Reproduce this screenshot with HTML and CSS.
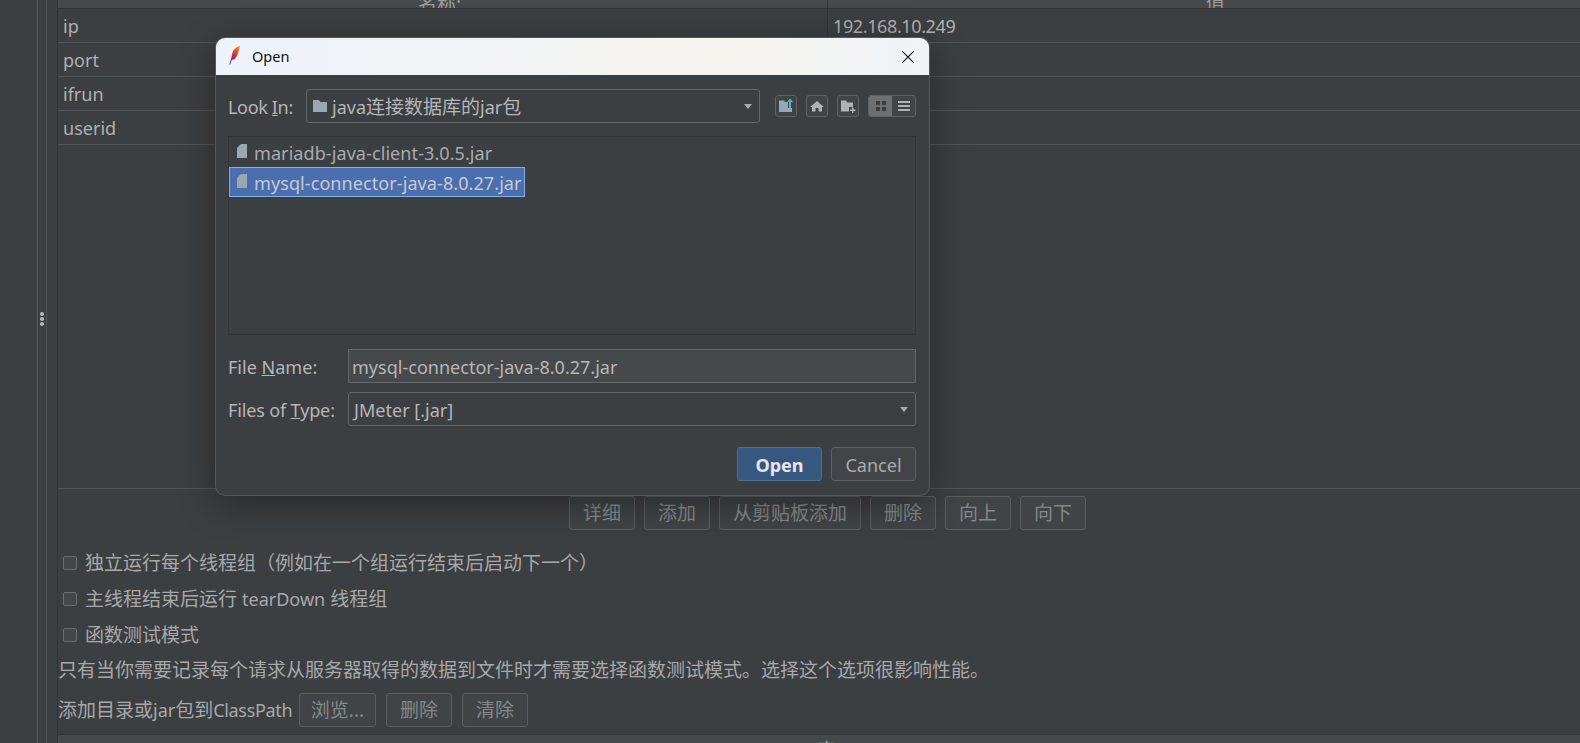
FILE: index.html
```html
<!DOCTYPE html>
<html lang="zh">
<head>
<meta charset="utf-8">
<title>JMeter Open</title>
<link rel="stylesheet" href="styles.css">
</head>
<body>
<div class="rail">
  <div class="rail-a"></div>
  <div class="rail-b"><span class="dot"></span><span class="dot"></span><span class="dot"></span></div>
  <div class="rail-c"></div>
</div>
<main class="main">
  <section class="table">
    <div class="thead"><div class="th th-name"><span>名称:</span></div><div class="th th-value"><span>值</span></div></div>
    <div class="row"><div class="cell cell-name en">ip</div><div class="cell en ipval">192.168.10.249</div></div>
    <div class="row"><div class="cell cell-name en">port</div><div class="cell"></div></div>
    <div class="row"><div class="cell cell-name en">ifrun</div><div class="cell"></div></div>
    <div class="row"><div class="cell cell-name en">userid</div><div class="cell"></div></div>
    <div class="table-fill"></div>
  </section>
  <div class="btn-row">
    <button class="btn">详细</button>
    <button class="btn">添加</button>
    <button class="btn">从剪贴板添加</button>
    <button class="btn">删除</button>
    <button class="btn">向上</button>
    <button class="btn">向下</button>
  </div>
  <div class="options">
    <label class="opt"><span class="check"></span><span>独立运行每个线程组（例如在一个组运行结束后启动下一个）</span></label>
    <label class="opt"><span class="check"></span><span>主线程结束后运行 <span class="en">tearDown</span> 线程组</span></label>
    <label class="opt"><span class="check"></span><span>函数测试模式</span></label>
  </div>
  <p class="info">只有当你需要记录每个请求从服务器取得的数据到文件时才需要选择函数测试模式。选择这个选项很影响性能。</p>
  <div class="cp-row">
    <span class="cp-label">添加目录或<span class="en">jar</span>包到<span class="en cp-en">ClassPath</span></span>
    <button class="btn btn-browse">浏览...</button>
    <button class="btn">删除</button>
    <button class="btn">清除</button>
  </div>
  <div class="bottom-head"><span>库</span></div>
</main>

<div class="dialog">
  <header class="titlebar">
    <svg class="feather" viewBox="0 0 11 19" width="11" height="19">
      <defs><linearGradient id="fg" x1="1" y1="0" x2="0" y2="1"><stop offset="0" stop-color="#f6a623"/><stop offset=".4" stop-color="#e8502e"/><stop offset=".75" stop-color="#bd1e5c"/><stop offset="1" stop-color="#6d2a86"/></linearGradient></defs>
      <path fill="url(#fg)" d="M11 0C8 .5 4.500 3 3.500 7L1.800 14 5 13.500C7 12 8.500 9 9.300 6.500 10 4 10.800 2 11 0Z"/>
      <path stroke="#6d2a86" stroke-width="1" fill="none" d="M2.500 13L.8 18.500"/>
    </svg>
    <span class="title">Open</span>
    <svg class="close" viewBox="0 0 12 12" width="12" height="12"><path d="M0 0L12 12M12 0L0 12" stroke="#111" stroke-width="1.100" fill="none"/></svg>
  </header>
  <div class="dlg-body">
    <div class="look-row">
      <span class="look-label en">Look <u>I</u>n:</span>
      <div class="combo combo-look">
        <svg class="ico-folder" viewBox="0 0 14 12" width="14" height="12"><path fill="#9aa7b0" d="M0 0H6L7.500 2H14V12H0Z"/></svg>
        <span class="combo-text"><span class="en">java</span>连接数据库的<span class="en">jar</span>包</span>
        <i class="caret"></i>
      </div>
      <div class="tools">
        <span class="tool"><svg viewBox="0 0 16 16" width="16" height="16"><path fill="#9aa7b0" d="M1 2.500H6L7 4H10V10H14V14H1Z"/><path fill="#40b6e0" d="M12 .5L15 4H13V10H11V4H9Z"/></svg></span>
        <span class="tool"><svg viewBox="0 0 16 16" width="16" height="16"><path fill="#afb1b3" d="M8 3L15 9H13V13.500H9.500V10H6.500V13.500H3V9H1Z"/></svg></span>
        <span class="tool"><svg viewBox="0 0 16 16" width="16" height="16"><path fill="#afb1b3" d="M1 2.500H6L7.500 4.500H13V9H9V13.500H1Z"/><path fill="#afb1b3" d="M12 9.500H13.500V11.500H15.500V13H13.500V15H12V13H10V11.500H12Z"/></svg></span>
        <span class="toggle">
          <span class="tg tg-on"><svg viewBox="0 0 10 10" width="10" height="10"><path fill="#3a3c3e" d="M0 0H4V4H0ZM6 0H10V4H6ZM0 6H4V10H0ZM6 6H10V10H6Z"/></svg></span>
          <span class="tg"><svg viewBox="0 0 12 10" width="12" height="10"><path fill="#afb1b3" d="M0 0H12V2H0ZM0 4H12V6H0ZM0 8H12V10H0Z"/></svg></span>
        </span>
      </div>
    </div>
    <div class="files">
      <div class="file en"><svg class="ico-file" viewBox="0 0 10 14" width="10" height="14"><path fill="#9aa7b0" d="M4 0H10V14H0V4Z"/></svg><span class="file-name">mariadb-java-client-3.0.5.jar</span></div>
      <div class="file file-sel en"><svg class="ico-file" viewBox="0 0 10 14" width="10" height="14"><path fill="#9aa7b0" d="M4 0H10V14H0V4Z"/></svg><span class="file-name">mysql-connector-java-8.0.27.jar</span></div>
    </div>
    <div class="form-row">
      <span class="form-label en">File <u>N</u>ame:</span>
      <div class="input en">mysql-connector-java-8.0.27.jar</div>
    </div>
    <div class="form-row form-row-2">
      <span class="form-label en tight">Files of <u>T</u>ype:</span>
      <div class="combo combo-type en"><span class="combo-text">JMeter [.jar]</span><i class="caret"></i></div>
    </div>
    <div class="actions">
      <button class="act act-primary en">Open</button>
      <button class="act en">Cancel</button>
    </div>
  </div>
</div>
</body>
</html>
```
FILE: styles.css
```css
* { box-sizing: border-box; }
html, body { height: 100%; }
body {
  margin: 0;
  height: 743px;
  overflow: hidden;
  display: flex;
  background: #3c3f41;
  color: #b4b6b8;
  font-family: "Noto Sans", "Noto Sans CJK SC", sans-serif;
  font-size: 19px;
  line-height: 1;
}
button { font: inherit; cursor: default; }
.en { font-size: 18.050px; }

.rail { flex: 0 0 58px; display: flex; height: 743px; }
.rail-a { width: 38px; border-right: 1px solid #54585a; }
.rail-b { width: 9px; border-right: 1px solid #54585a; display: flex; flex-direction: column; align-items: center; justify-content: flex-start; gap: 1.500px; padding-top: 312px; }
.rail-c { width: 11px; border-right: 1px solid #323436; }
.dot { width: 3.500px; height: 3.500px; border-radius: 50%; background: #b4b4b4; }

.main { flex: 1; min-width: 0; display: flex; flex-direction: column; }

.table { height: 489px; flex: none; border-bottom: 1px solid #515558; display: flex; flex-direction: column; }
.thead { height: 9px; display: flex; background: #45494b; border-bottom: 1px solid #323436; overflow: hidden; flex: none; }
.th { display: flex; align-items: flex-end; height: 8px; color: #9a9c9e; }
.th span { flex: none; line-height: 20px; margin-bottom: -6px; }
.th-name { flex: 0 0 770px; border-right: 1px solid #323436; justify-content: center; padding-right: 6px; }
.th-value { flex: 1; padding-left: 378px; }
.row { height: 34px; display: flex; border-bottom: 1px solid #515558; flex: none; }
.cell { display: flex; align-items: center; flex: 1; padding: 1px 0 0 5px; color: #aeb0b2; }
.cell-name { flex: 0 0 770px; border-right: 1px solid #323436; }
.ipval { letter-spacing: -.4px; }
.table-fill { flex: 1; }

.btn-row { margin-top: 7px; padding-left: 17px; display: flex; justify-content: center; gap: 9px; flex: none; }
.btn {
  height: 34px;
  padding: 0 13px;
  background: #404446;
  border: 1px solid #5b5e60;
  border-radius: 3px;
  color: #85888a;
  white-space: nowrap;
}

.options { margin-top: 15px; flex: none; }
.opt { height: 36px; display: flex; align-items: center; padding-left: 5px; gap: 8px; color: #a6a8aa; white-space: nowrap; }
.check { flex: none; width: 14px; height: 14px; border: 1px solid #6b6e70; border-radius: 2px; background: #43474a; }

.info { margin: 0; height: 34px; display: flex; align-items: center; color: #a6a8aa; flex: none; }

.cp-row { margin-top: 6px; display: flex; align-items: center; gap: 10px; flex: none; }
.cp-label { margin-right: -2px; color: #a6a8aa; width: 233px; white-space: nowrap; }
.cp-en { letter-spacing: -.35px; }
.btn-browse { width: 77px; padding: 0; }

.bottom-head { margin-top: 7px; height: 20px; border-top: 1px solid #323436; background: #45494b; display: flex; justify-content: center; padding: 6px 0 0 14px; color: #9a9c9e; flex: none; }

.dialog {
  position: absolute;
  left: 216px;
  top: 38px;
  width: 713px;
  height: 457px;
  border-radius: 9px;
  background: #3c3f41;
  box-shadow: 0 0 0 1px #55585a, 0 8px 36px rgba(0, 0, 0, .38);
  display: flex;
  flex-direction: column;
  overflow: hidden;
}
.titlebar {
  height: 37px;
  flex: none;
  display: flex;
  align-items: center;
  padding: 0 15px 0 13px;
  background: linear-gradient(90deg, #eef2fa 0%, #f3f3f3 50%, #f6f4ef 70%, #eff3f7 100%);
  color: #111;
}
.feather { flex: none; margin-top: -2px; }
.title { margin-left: 12px; font-size: 14.500px; flex: 1; }
.close { flex: none; margin-top: 1px; }

.dlg-body { flex: 1; padding: 14px 13px 14px 12px; display: flex; flex-direction: column; color: #b4b6b8; }

.look-row { display: flex; align-items: center; height: 34px; flex: none; }
.look-label { width: 78px; flex: none; white-space: nowrap; padding-top: 2px; letter-spacing: -.35px; }
.combo {
  height: 34px;
  border: 1px solid #646769;
  border-radius: 3px;
  display: flex;
  align-items: center;
  position: relative;
  white-space: nowrap;
}
.combo-text { padding-top: 2px; }
.combo-look { width: 454px; flex: none; padding-left: 6px; }
.combo-look .ico-folder { margin-right: 5px; flex: none; }
.combo-type { flex: 1; padding-left: 5px; }
.caret { position: absolute; right: 7px; top: 14px; width: 0; height: 0; border-left: 4px solid transparent; border-right: 4px solid transparent; border-top: 5px solid #a8aaac; }

.tools { margin-left: 15px; display: flex; gap: 9px; align-items: center; }
.tool { width: 22px; height: 22px; border: 1px solid #5f6264; border-radius: 3px; background: #404446; display: flex; align-items: center; justify-content: center; }
.toggle { width: 48px; height: 22px; border: 1px solid #5f6264; border-radius: 3px; display: flex; overflow: hidden; background: #404446; }
.tg { flex: 1; display: flex; align-items: center; justify-content: center; }
.tg-on { background: #6e6f70; }

.files { margin-top: 13px; height: 199px; flex: none; border: 1px solid #333537; background: #3c3f41; }
.file { height: 30px; display: flex; align-items: center; padding-left: 8px; white-space: nowrap; width: fit-content; min-width: 296px; color: #a8aaac; }
.file-name { padding-top: 3px; letter-spacing: .07px; }
.file-sel { width: 296px; background: #4b6eaf; border: 1px solid #7bb3e8; padding-left: 7px; color: #c6cad0; }
.ico-file { margin-right: 7px; flex: none; margin-top: -2px; }

.form-row { margin-top: 14px; display: flex; align-items: center; height: 34px; flex: none; }
.form-row-2 { margin-top: 9px; }
.form-label { width: 120px; flex: none; white-space: nowrap; padding-top: 2px; }
.tight { letter-spacing: -.15px; }
.input { flex: 1; height: 34px; background: #45494a; border: 1px solid #646769; display: flex; align-items: center; padding: 2px 0 0 3px; white-space: nowrap; }

.actions { margin-top: 21px; display: flex; justify-content: flex-end; gap: 9px; flex: none; }
.act { width: 85px; height: 34px; padding-top: 3px; background: #414547; border: 1px solid #5e6163; border-radius: 3px; color: #a8aaac; }
.act-primary { background: #365880; border-color: #4c708c; color: #e4e6e8; font-weight: 700; }
```
